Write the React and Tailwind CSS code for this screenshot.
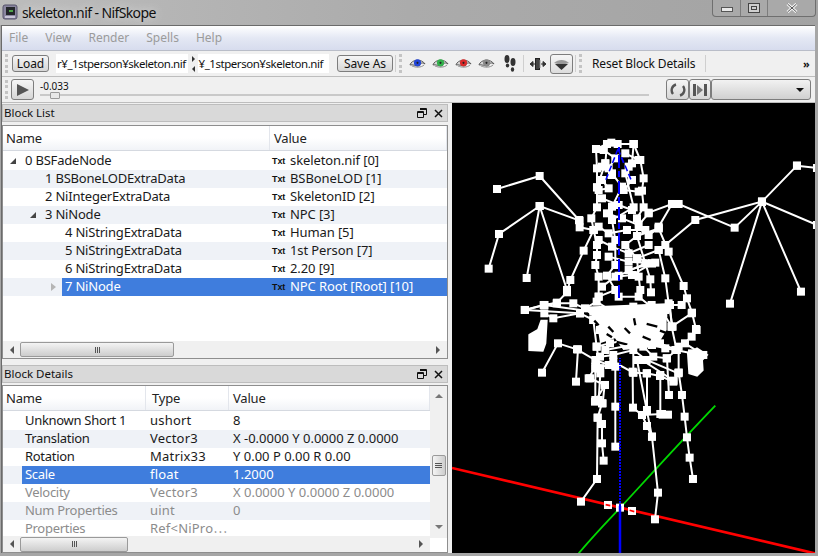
import React from 'react';

const FONT = "font-['Noto_Sans','Noto_Sans_CJK_JP',sans-serif]";

// skeleton chains, coords are in 3x zoom space of the viewport
const upperChains = [
  [[135, 177], [263, 138], [381, 270], [383, 292], [425, 300]],
  [[110, 416], [141, 312], [263, 228], [383, 272]],
  [[224, 444], [263, 228], [345, 480]],
  [[1035, 107], [930, 215], [848, 293], [680, 222], [660, 222], [590, 248]],
  [[1095, 114], [1035, 107]],
  [[1095, 285], [930, 215], [730, 270], [640, 345]],
  [[834, 521], [930, 215], [1047, 485]],
  [[660, 222], [620, 290]],
  [[425, 300], [395, 362], [355, 450], [345, 487], [315, 518], [275, 525], [218, 540]],
  [[620, 295], [650, 365], [695, 468], [705, 505], [720, 548], [732, 597]],
  [[620, 360], [640, 445], [650, 520], [662, 590]],
  [[555, 318], [595, 448], [597, 487]],
  // head and chest
  [[432, 57], [435, 115], [435, 172], [435, 232], [418, 265], [425, 300], [435, 345], [435, 375], [430, 405], [440, 440], [440, 500]],
  [[545, 42], [565, 90], [575, 145], [570, 182], [575, 232], [555, 265], [555, 318], [520, 345], [555, 385], [560, 440], [565, 480]],
  [[432, 57], [465, 42], [478, 38], [497, 42], [545, 42]],
  [[465, 42], [460, 100], [435, 172]],
  [[460, 100], [480, 130], [510, 170], [480, 230], [480, 270], [490, 330], [490, 405], [465, 437], [490, 480], [440, 500]],
  [[545, 42], [540, 100], [520, 130], [545, 232], [480, 270]],
  [[590, 315], [620, 295], [555, 318]],
  [[620, 360], [555, 385], [610, 398], [530, 420]],
  [[580, 400], [500, 437]],
  [[455, 60], [490, 85], [470, 115], [450, 110]],
  [[520, 70], [560, 90], [530, 110]],
  [[480, 135], [450, 150], [470, 175], [440, 180]],
  [[540, 150], [515, 180], [560, 185]],
  [[450, 205], [500, 225], [540, 240]],
  [[465, 250], [510, 265], [560, 285], [590, 250]],
  [[440, 290], [470, 310], [525, 300], [580, 300]],
  [[440, 330], [480, 350], [530, 370], [590, 345]],
  [[470, 380], [530, 395], [600, 400]],
  [[450, 470], [490, 440], [540, 435], [600, 400]],
  [[500, 500], [560, 500], [597, 530], [640, 540]],
];

// cluster round the hips, coords taken off a closer crop and shifted by MASS_DX/DY
const MASS_DX = 144;
const MASS_DY = 510;
const massChains = [
  [[75, 30], [133, 15], [170, 10], [220, 10], [255, 25], [290, 5], [330, 30], [400, 20], [455, 15], [510, 15], [545, 15]],
  [[133, 40], [160, 55], [240, 40], [280, 60], [340, 60], [380, 50], [420, 60], [450, 60], [490, 40], [515, 80], [575, 40]],
  [[75, 30], [240, 40]],
  [[133, 15], [280, 35]],
  [[300, 90], [350, 100], [400, 110], [440, 100], [480, 130], [530, 150], [575, 110], [590, 90]],
  [[290, 140], [330, 130], [380, 120], [430, 140], [460, 170], [500, 175], [555, 130], [610, 165]],
  [[300, 170], [340, 165], [400, 150], [440, 180], [535, 220]],
  [[300, 205], [340, 185], [400, 218], [440, 220], [480, 228], [520, 245]],
  [[270, 235], [315, 255], [285, 305]],
  [[280, 60], [290, 140], [300, 205]],
  [[400, 110], [400, 218]],
  [[510, 15], [515, 80], [530, 150]],
];

// gaps showing through the cluster, same coords as massChains
const massGaps = [
  'M283 62 L296 76',
  'M325 80 L340 96',
  'M320 102 L336 112',
  'M374 84 L390 100',
  'M402 55 L406 76',
  'M440 72 L472 80',
  'M480 92 L502 100',
  'M350 126 L382 134',
  'M262 70 L270 96',
  'M428 110 L452 120',
];

const lowerChains = [
  [[270, 98], [318, 10], [375, 28], [430, 60], [470, 75]],
  [[372, 125], [378, 28]],
  [[410, 115], [430, 80]],
  [[430, 85], [430, 180], [450, 190], [437, 233], [450, 252], [450, 310], [455, 362]],
  [[445, 100], [440, 180]],
  [[458, 135], [452, 190]],
  [[490, 80], [490, 200], [490, 320]],
  [[437, 233], [435, 417], [387, 485]],
  [[542, 95], [543, 203], [570, 225], [585, 258], [600, 290], [618, 458], [609, 538]],
  [[555, 60], [600, 290]],
  [[585, 100], [585, 210]],
  [[625, 105], [625, 222]],
  [[570, 60], [665, 122], [680, 98], [690, 165], [698, 230], [705, 292], [713, 353], [723, 417]],
  [[645, 55], [651, 165]],
  [[680, 20], [680, 98]],
  [[570, 225], [630, 222]],
  [[460, 30], [540, 15], [600, 15], [640, 25], [670, 30], [720, 40]],
];

const shiftedMass = massChains.map((c) => c.map((p) => [p[0] + MASS_DX, p[1] + MASS_DY]));

function Node({ p }) {
  return <rect x={p[0] - 12} y={p[1] - 12} width="24" height="24" stroke="none" />;
}

function Skeleton() {
  const upper = [...upperChains, ...shiftedMass];
  return (
    <svg viewBox="0 0 364 450" className="block w-[364px] h-[450px]">
      {/* axes */}
      <g transform="translate(0 237) scale(0.3333)" fill="none">
        <path d="M0 384 L1092 641" stroke="#ff0000" strokeWidth="8" />
        <path d="M380 640 C 440 570 480 530 505 503 C 600 400 700 290 790 197" stroke="#00d800" strokeWidth="5.5" />
      </g>
      <g transform="translate(0 27) scale(0.3333)" fill="white" stroke="white" strokeWidth="6">
        {upper.map((c, i) => (
          <polyline key={i} points={c.map((p) => p.join(',')).join(' ')} fill="none" />
        ))}
        {/* solid part of the cluster and the left hand */}
        <path d="M389 530 L644 520 L644 600 L614 650 L514 660 L489 625 L444 640 L434 570 Z" stroke="none" />
        <path d="M232 615 L258 600 L268 572 L284 572 L280 640 L272 662 L232 660 Z" />
        {upper.flat().map((p, i) => (
          <Node key={i} p={p} />
        ))}
        <g transform={`translate(${MASS_DX} ${MASS_DY})`} fill="none" stroke="#000" strokeWidth="7">
          {massGaps.map((d) => (
            <path key={d} d={d} />
          ))}
        </g>
      </g>
      <g transform="translate(0 237) scale(0.3333)" fill="white" stroke="white" strokeWidth="6">
        <path d="M708 40 L735 25 L765 45 L750 60 L752 90 L735 107 L712 100 Z" />
        {lowerChains.map((c, i) => (
          <polyline key={i} points={c.map((p) => p.join(',')).join(' ')} fill="none" />
        ))}
        {lowerChains.flat().map((p, i) => (
          <Node key={i} p={p} />
        ))}
        <rect x="620" y="212" width="40" height="24" stroke="none" />
        {[[468, 495], [504, 503], [540, 513]].map((p) => (
          <Node key={p[0]} p={p} />
        ))}
        <path d="M461 494 L475 497 M533 511 L547 515" stroke="#ff0000" strokeWidth="5" fill="none" />
      </g>
      {/* z axis, with the little arrow head up top */}
      <g fill="none" stroke="#0000ff">
        <path d="M168 403 V450" strokeWidth="2.5" />
        <path d="M168 403 V255" strokeWidth="2" strokeDasharray="2 1" />
        <path d="M167 195 V44" strokeWidth="2" strokeDasharray="13 4 6 3" />
        <path d="M166 46 L153 79 M166 46 L180 79 M166 46 L160 61 M166 46 L172 61" strokeWidth="1.5" strokeDasharray="6 3" />
      </g>
    </svg>
  );
}

function Handle() {
  return <div className="w-[3px] h-[19px] mx-[3px] border-l-[3px] border-dotted border-[#c4c4c4] shrink-0" />;
}

function Sep() {
  return <div className="w-px h-[17px] bg-[#cfcfcf] shrink-0" />;
}

function Eye({ color }) {
  return (
    <svg width="17" height="11" viewBox="0 0 18 11" className="shrink-0">
      <path d="M1 7 C3 1 13 0 17 6 C14 4 12 5 11 8 C8 9 4 6 1 7 Z" fill="#d8d8d8" stroke="#555" strokeWidth="1" />
      <circle cx="9" cy="4.8" r="3.8" fill={color} />
      <circle cx="9" cy="4.8" r="1.1" fill="#222" />
      <path d="M3 8 C7 10 13 10 16 7" fill="none" stroke="#8a8a8a" strokeWidth="1" />
    </svg>
  );
}

function Feet() {
  return (
    <svg width="12" height="18" viewBox="0 0 12 18" className="shrink-0" fill="#333">
      <ellipse cx="3" cy="4" rx="2.5" ry="4" />
      <ellipse cx="3.5" cy="10.5" rx="1.7" ry="2" />
      <ellipse cx="9" cy="7" rx="2.5" ry="4" />
      <ellipse cx="8.5" cy="14.5" rx="1.7" ry="2.2" />
    </svg>
  );
}

function ScrollH({ thumb }) {
  return (
    <div className="flex items-center h-full flex-1 bg-[#f0f0f0]">
      <div className="w-[17px] flex justify-center shrink-0">
        <div className="w-0 h-0 border-y-[4px] border-y-transparent border-r-[4px] border-r-[#555]" />
      </div>
      <div className={`${thumb} h-[15px] rounded-[2px] border border-[#9a9a9a] bg-linear-to-b from-[#f4f4f4] to-[#cdcdcd] flex items-center justify-center gap-px`}>
        <div className="w-px h-[6px] bg-[#555]" />
        <div className="w-px h-[6px] bg-[#555]" />
        <div className="w-px h-[6px] bg-[#555]" />
      </div>
      <div className="flex-1" />
      <div className="w-[18px] flex justify-center shrink-0">
        <div className="w-0 h-0 border-y-[4px] border-y-transparent border-l-[4px] border-l-[#555]" />
      </div>
    </div>
  );
}

function DockTitle({ title }) {
  return (
    <div className="h-[18px] bg-[#d9d9d9] border border-[#bdbdbd] flex items-center pl-[1px] pr-[3px] text-[11.5px] text-[#111] shrink-0">
      <span className="flex-1">{title}</span>
      <svg width="10" height="10" viewBox="0 0 10 10" className="mr-[7px]">
        <path d="M3 .5 H9.5 V6.5 H7 M.5 3.5 H6.5 V9.5 H.5 Z M3 1.5 H9.5 M.5 4.5 H6.5" fill="none" stroke="#111" strokeWidth="1" />
      </svg>
      <svg width="9" height="9" viewBox="0 0 9 9" className="mr-[1px]">
        <path d="M1 1 L8 8 M8 1 L1 8" stroke="#111" strokeWidth="1.5" />
      </svg>
    </div>
  );
}

function TxtIcon() {
  return <span className="w-[13px] text-[9px] leading-none font-bold text-[#111] font-['Liberation_Sans'] shrink-0">Txt</span>;
}

const treeRows = [
  { label: '0 BSFadeNode', value: 'skeleton.nif [0]', indent: 'w-[19px]', arrow: 'solid', arrowPad: 'ml-[7px]' },
  { label: '1 BSBoneLODExtraData', value: 'BSBoneLOD [1]', indent: 'w-[39px]' },
  { label: '2 NiIntegerExtraData', value: 'SkeletonID [2]', indent: 'w-[39px]' },
  { label: '3 NiNode', value: 'NPC [3]', indent: 'w-[39px]', arrow: 'solid', arrowPad: 'ml-[27px]' },
  { label: '4 NiStringExtraData', value: 'Human [5]', indent: 'w-[59px]' },
  { label: '5 NiStringExtraData', value: '1st Person [7]', indent: 'w-[59px]' },
  { label: '6 NiStringExtraData', value: '2.20 [9]', indent: 'w-[59px]' },
  { label: '7 NiNode', value: 'NPC Root [Root] [10]', indent: 'w-[59px]', arrow: 'open', arrowPad: 'ml-[48px]', selected: true },
];

const detailRows = [
  { name: 'Unknown Short 1', type: 'ushort', value: '8' },
  { name: 'Translation', type: 'Vector3', value: 'X -0.0000 Y 0.0000 Z 0.0000' },
  { name: 'Rotation', type: 'Matrix33', value: 'Y 0.00 P 0.00 R 0.00' },
  { name: 'Scale', type: 'float', value: '1.2000', selected: true },
  { name: 'Velocity', type: 'Vector3', value: 'X 0.0000 Y 0.0000 Z 0.0000', off: true },
  { name: 'Num Properties', type: 'uint', value: '0', off: true },
  { name: 'Properties', type: 'Ref<NiPro\u22EF', value: '', off: true },
];

function HeaderCell({ className, children }) {
  return (
    <div className={`${className} h-full flex items-center pl-[3px] pt-[2px] border-r border-[#e3e6ec] bg-linear-to-b from-white via-white to-[#f1f3f7] text-[13px] text-[#222] tracking-[-0.2px]`}>
      {children}
    </div>
  );
}

function BlockList() {
  return (
    <div className="flex flex-col h-[255px] shrink-0">
      <DockTitle title="Block List" />
      <div className="mt-[3px] flex-1 flex flex-col border border-[#8e8e8e] bg-white min-h-0">
        <div className="h-[25px] flex border-b border-[#d5d9e0] shrink-0">
          <HeaderCell className="w-[267px]">Name</HeaderCell>
          <HeaderCell className="flex-1"><span className="ml-[1px]">Value</span></HeaderCell>
        </div>
        <div className="flex-1 pt-px">
          {treeRows.map((r, i) => (
            <div key={r.label} className={`h-[18px] flex items-center text-[13px] text-[#1a1a1a] ${i % 2 ? 'bg-[#eff2f7]' : 'bg-white'}`}>
              <div className="w-[267px] h-full flex shrink-0 tracking-[-0.2px]">
                <div className={`${r.indent} h-full flex items-center shrink-0`}>
                  {r.arrow === 'solid' && (
                    <div className={`${r.arrowPad} w-0 h-0 border-b-[6px] border-b-[#444] border-l-[6px] border-l-transparent`} />
                  )}
                  {r.arrow === 'open' && (
                    <div className={`${r.arrowPad} w-0 h-0 border-y-[4px] border-y-transparent border-l-[5px] border-l-[#b5b5b5]`} />
                  )}
                </div>
                <div className={`flex-1 h-full flex items-center pl-[3px] ${r.selected ? 'bg-[#3f7ddd] text-white' : ''}`}>{r.label}</div>
              </div>
              <div className={`flex-1 h-full flex items-center pl-[2px] tracking-[-0.1px] ${r.selected ? 'bg-[#3f7ddd] text-white' : ''}`}>
                <TxtIcon />
                <span className="ml-[5px]">{r.value}</span>
              </div>
            </div>
          ))}
        </div>
        <div className="h-[17px] flex shrink-0">
          <ScrollH thumb="w-[154px]" />
        </div>
      </div>
    </div>
  );
}

function BlockDetails() {
  return (
    <div className="flex flex-col flex-1 min-h-0 mt-[6px]">
      <DockTitle title="Block Details" />
      <div className="mt-[2px] flex-1 flex border border-[#8e8e8e] bg-white min-h-0">
        <div className="flex-1 flex flex-col min-w-0">
          <div className="h-[25px] flex border-b border-[#d5d9e0] shrink-0">
            <HeaderCell className="w-[143px]">Name</HeaderCell>
            <HeaderCell className="w-[83px]"><span className="ml-[3px]">Type</span></HeaderCell>
            <HeaderCell className="flex-1"><span className="ml-[1px]">Value</span></HeaderCell>
          </div>
          <div className="flex-1 pt-px overflow-hidden">
            {detailRows.map((r, i) => (
              <div key={r.name} className={`h-[18px] flex text-[13px] ${i % 2 ? 'bg-[#eff2f7]' : 'bg-white'} ${r.off ? 'text-[#8c8c8c]' : 'text-[#1a1a1a]'}`}>
                <div className="w-[19px] shrink-0" />
                <div className={`flex-1 flex items-center ${r.selected ? 'bg-[#3f7ddd] text-white' : ''}`}>
                  <div className="w-[126px] pl-[3px] shrink-0 tracking-[-0.3px]">{r.name}</div>
                  <div className="w-[83px] pl-[2px] shrink-0 tracking-[0.2px]">{r.type}</div>
                  <div className="pl-[2px] whitespace-nowrap">{r.value}</div>
                </div>
              </div>
            ))}
          </div>
          <div className="h-[16px] flex shrink-0">
            <ScrollH thumb="w-[108px]" />
          </div>
        </div>
        <div className="w-[17px] flex flex-col items-center bg-[#f0f0f0] shrink-0">
          <div className="h-[69px] w-full flex justify-center pt-[8px]">
            <div className="w-0 h-0 border-x-[4px] border-x-transparent border-b-[4px] border-b-[#777]" />
          </div>
          <div className="w-[14px] h-[21px] rounded-[2px] border border-[#9a9a9a] bg-linear-to-r from-[#f4f4f4] to-[#cdcdcd] flex flex-col items-center justify-center gap-px">
            <div className="w-[7px] h-px bg-[#555]" />
            <div className="w-[7px] h-px bg-[#555]" />
            <div className="w-[7px] h-px bg-[#555]" />
          </div>
          <div className="h-[62px] w-full flex justify-center items-end pb-[9px]">
            <div className="w-0 h-0 border-x-[4px] border-x-transparent border-t-[4px] border-t-[#777]" />
          </div>
          <div className="flex-1 w-full bg-white" />
        </div>
      </div>
    </div>
  );
}

const btn = 'rounded-[3px] border border-[#7d7d7d] bg-linear-to-b from-[#f6f6f6] to-[#d6d6d6] flex items-center justify-center shrink-0';

export default function App() {
  return (
    <div className={`${FONT} w-[818px] h-[556px] overflow-hidden flex flex-col bg-[#a6a6a6] text-[#111]`}>
      {/* Title bar */}
      <div className="h-[25px] flex shrink-0 bg-linear-to-r from-[#bcbcbc] via-[#ababab] to-[#a3a3a3]">
        <svg width="16" height="16" viewBox="0 0 16 16" className="ml-[2px] mt-[4px] shrink-0">
          <rect x="1" y="1" width="14" height="14" rx="2" fill="#8a86a0" stroke="#55526a" />
          <rect x="4" y="3" width="9" height="8" fill="#23262a" />
          <rect x="7" y="6" width="4" height="2" fill="#4fa54a" />
          <rect x="3" y="12" width="10" height="2" fill="#c9c6d8" />
        </svg>
        <div className="ml-[4px] h-[24px] flex items-center text-[14px] tracking-[-0.6px] text-[#101010] [text-shadow:0_0_8px_#e4e4e4]">skeleton.nif - NifSkope</div>
        <div className="flex-1" />
        <div className="w-[104px] h-[17px] mr-[2px] flex border border-t-0 border-[#6f6f6f] rounded-b-[4px] bg-[#a9a9a9]">
          <div className="w-[28px] flex items-center justify-center border-r border-[#7d7d7d]">
            <div className="w-[12px] h-[5px] mt-[3px] border border-[#555] bg-[#e8e8e8]" />
          </div>
          <div className="w-[27px] flex items-center justify-center border-r border-[#7d7d7d]">
            <div className="w-[12px] h-[10px] border border-[#444] bg-[#cfcfcf] flex items-center justify-center">
              <div className="w-[6px] h-[4px] border border-[#444]" />
            </div>
          </div>
          <div className="flex-1 flex items-center justify-center">
            <svg width="12" height="10" viewBox="0 0 12 10">
              <path d="M1.5 1 L10.5 9 M10.5 1 L1.5 9" stroke="#f2f2f2" strokeWidth="3" />
              <path d="M1.5 1 L10.5 9 M10.5 1 L1.5 9" stroke="#555" strokeWidth="1" />
            </svg>
          </div>
        </div>
      </div>

      {/* Window body */}
      <div className="flex-1 flex flex-col ml-[1px] mr-[3px] mb-[3px] border-t border-l border-[#6b6b6b] bg-[#f0f0f0] min-h-0">
        {/* Menu */}
        <div className="h-[25px] flex items-center pl-[7px] gap-[17px] text-[12px] text-[#9b9b9b] border-b border-[#b9bdc8] bg-linear-to-b from-white via-[#e4e8f4] to-[#d7dcee] shrink-0">
          <span>File</span>
          <span>View</span>
          <span>Render</span>
          <span>Spells</span>
          <span>Help</span>
        </div>

        {/* Main toolbar */}
        <div className="h-[26px] flex items-center border-b border-[#bdbdbd] text-[12px] shrink-0">
          <Handle />
          <div className={`${btn} w-[37px] h-[17px] ml-[1px] tracking-[-0.1px]`}>Load</div>
          <div className="w-[132px] h-[19px] ml-[7px] bg-white flex items-center pl-px overflow-hidden whitespace-nowrap text-[11.5px] tracking-[-0.45px] shrink-0">r¥_1stperson¥skeleton.nif</div>
          <div className="w-[10px] h-[16px] flex flex-col justify-between items-center shrink-0">
            <div className="w-0 h-0 border-y-[3px] border-y-transparent border-l-[3px] border-l-[#333]" />
            <div className="w-0 h-0 border-y-[3px] border-y-transparent border-r-[3px] border-r-[#333]" />
          </div>
          <div className="w-[131px] h-[19px] bg-white flex items-center justify-end pr-[6px] overflow-hidden whitespace-nowrap text-[11.5px] tracking-[-0.45px] shrink-0">¥_1stperson¥skeleton.nif</div>
          <div className={`${btn} w-[56px] h-[17px] ml-[8px] tracking-[-0.1px]`}>Save As</div>
          <div className="ml-[2px]"><Sep /></div>
          <Handle />
          <div className="ml-[4px] flex items-center gap-[6px]">
            <Eye color="#2346d8" />
            <Eye color="#32b04a" />
            <Eye color="#d92a2a" />
            <Eye color="#8a8a8a" />
          </div>
          <div className="ml-[9px]"><Feet /></div>
          <div className="ml-[7px]"><Sep /></div>
          <svg width="16" height="12" viewBox="0 0 16 12" className="ml-[6px] shrink-0">
            <path d="M0 6 L3 3.5 V8.5 Z M16 6 L13 3.5 V8.5 Z M3 6 H5 M11 6 H13" fill="#333" stroke="#333" />
            <rect x="5.5" y="0.5" width="4" height="11" fill="#444" stroke="#222" />
            <rect x="9.5" y="2" width="1" height="8" fill="#999" />
          </svg>
          <div className={`${btn} w-[23px] h-[20px] ml-[4px] bg-linear-to-b from-[#e6e6e6] to-[#dcdcdc]`}>
            <svg width="17" height="12" viewBox="0 0 17 12">
              <path d="M1 5 C5 1 12 1 16 5 L8.5 7 Z" fill="#9a9a9a" />
              <path d="M2 6 H15 L8.5 12 Z" fill="#333" />
            </svg>
          </div>
          <div className="ml-[2px]"><Sep /></div>
          <Handle />
          <span className="ml-[7px] w-[102px] shrink-0 tracking-[-0.15px] whitespace-nowrap">Reset Block Details</span>
          <div className="ml-[11px]"><Sep /></div>
          <span className="ml-[97px] text-[11px] font-bold leading-none">&raquo;</span>
        </div>

        {/* Animation toolbar */}
        <div className="h-[26px] flex items-center shrink-0 border-b border-[#bdbdbd]">
          <Handle />
          <div className={`${btn} w-[23px] h-[21px] bg-linear-to-b from-[#e8e8e8] to-[#d4d4d4]`}>
            <div className="w-0 h-0 border-y-[6px] border-y-transparent border-l-[12px] border-l-[#555]" />
          </div>
          <div className="ml-[6px] w-[609px] flex flex-col shrink-0">
            <span className="text-[10px] leading-[12px] h-[12px]">-0.033</span>
            <div className="relative h-[8px]">
              <div className="mt-[2px] h-[2px] bg-[#c9c9c9]" />
              <div className="absolute left-[10px] top-0 w-[10px] h-[7px] rounded-[1px] border border-[#9a9a9a] bg-[#e8e8e8]" />
            </div>
          </div>
          <div className="ml-[17px] flex">
            <div className={`${btn} w-[23px] h-[21px]`}>
              <svg width="16" height="16" viewBox="0 0 16 16" fill="none" stroke="#555" strokeWidth="2.4">
                <path d="M3 12 A6 6 0 0 1 6 2.5 M13 4 A6 6 0 0 1 10 13.5" />
              </svg>
            </div>
            <div className={`${btn} w-[22px] h-[21px]`}>
              <svg width="16" height="14" viewBox="0 0 16 14">
                <path d="M1 1 H4 V13 H1 Z M12 1 H15 V13 H12 Z" fill="#555" />
                <path d="M5 2 L11 7 L5 12 Z" fill="#777" />
              </svg>
            </div>
            <div className="w-[100px] h-[21px] rounded-[3px] border border-[#7d7d7d] bg-linear-to-b from-[#f2f2f2] to-[#d0d0d0] flex items-center justify-end pr-[6px] shrink-0">
              <div className="w-0 h-0 border-x-[4px] border-x-transparent border-t-[4px] border-t-[#111]" />
            </div>
          </div>
        </div>

        {/* Docks and GL view */}
        <div className="flex-1 flex min-h-0">
          <div className="w-[450px] shrink-0 flex flex-col pt-[1px] pr-[4px]">
            <BlockList />
            <BlockDetails />
          </div>
          <div className="flex-1 bg-black overflow-hidden">
            <Skeleton />
          </div>
        </div>
      </div>
    </div>
  );
}
